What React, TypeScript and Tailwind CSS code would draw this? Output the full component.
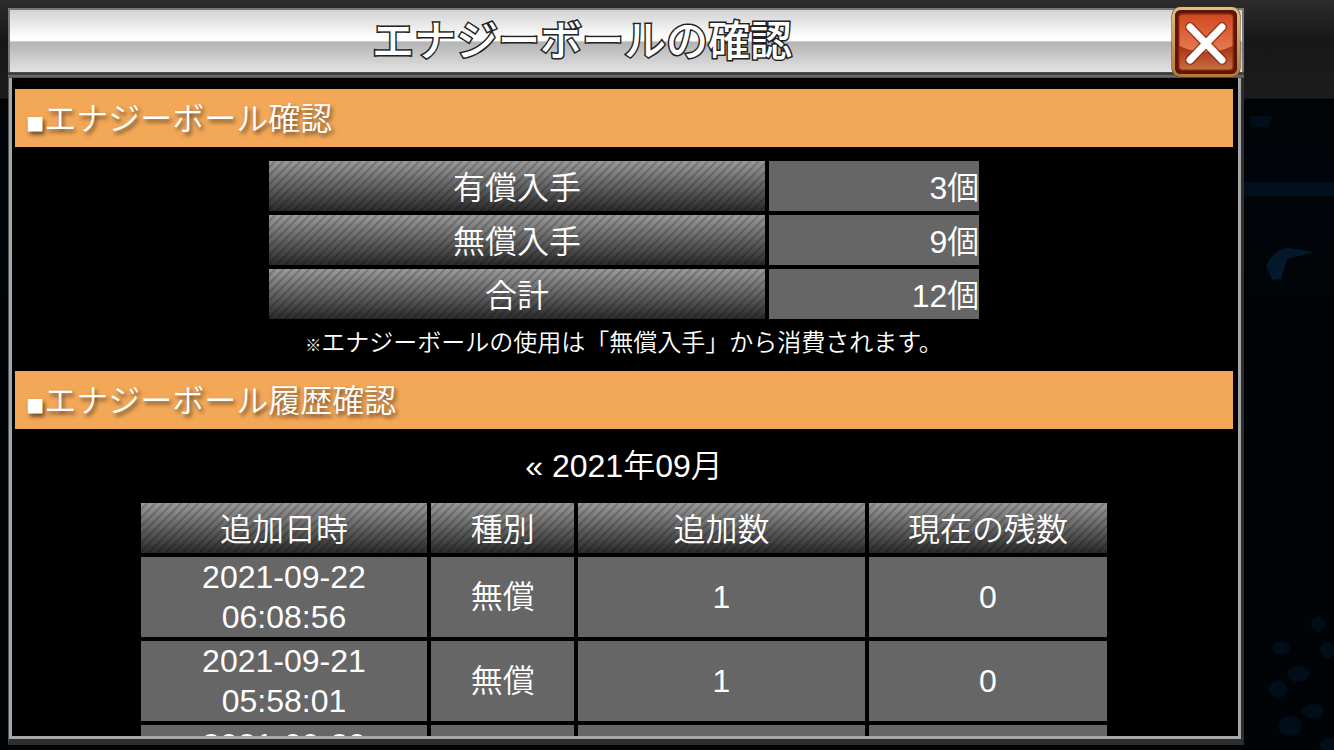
const summary = [
  { label: "有償入手", amount: "3個" },
  { label: "無償入手", amount: "9個" },
  { label: "合計", amount: "12個" },
];

const history = [
  { date: "2021-09-22", time: "06:08:56", kind: "無償", added: 1, rest: 0 },
  { date: "2021-09-21", time: "05:58:01", kind: "無償", added: 1, rest: 0 },
  { date: "2021-09-20", time: "06:12:30", kind: "無償", added: 1, rest: 0 },
];

const headCell =
  "h-[50px] p-0 pt-[3px] text-center font-[350] bg-[repeating-linear-gradient(135deg,#0000_0px,#0000_3px,#0003_4px,#0003_5px,#0000_6px),linear-gradient(#9a9a9a,#2a2a2a)]";

const dataCell = "p-0 bg-[#666666]";

// dimmed stadium behind the dialog
function Backdrop() {
  return (
    <svg
      aria-hidden="true"
      viewBox="0 0 90 750"
      preserveAspectRatio="xMaxYMin slice"
      className="absolute top-0 right-0 h-full w-[90px]"
    >
      <rect y="182" width="90" height="14" fill="#020f1c" />
      <path d="M5 116h24l-4 11H8z" fill="#020d1b" />
      <path d="M22 266q8-17 22-18l27 4-28 7-6 20-9 1z" fill="#04182b" />
      <g fill="#010d18">
        <ellipse cx="37" cy="648" rx="9" ry="7" />
        <ellipse cx="74" cy="624" rx="7" ry="8" />
        <ellipse cx="54" cy="674" rx="11" ry="8" />
        <ellipse cx="34" cy="689" rx="9" ry="9" />
        <ellipse cx="69" cy="711" rx="11" ry="7" />
        <ellipse cx="46" cy="726" rx="12" ry="10" />
        <ellipse cx="84" cy="650" rx="8" ry="8" />
        <ellipse cx="86" cy="745" rx="11" ry="7" />
      </g>
    </svg>
  );
}

function SectionTitle({ children }: { children: string }) {
  return (
    <h2 className="flex h-[58px] items-center bg-[#f3a858] px-[11px] pt-px [text-shadow:2px_3px_4px_#0009]">
      <span className="pt-2 text-[30px]">■</span>
      {children}
    </h2>
  );
}

function CloseButton() {
  return (
    <button type="button" aria-label="閉じる" className="absolute -top-[2px] right-[3px] h-[72px] w-[70px] cursor-pointer">
      <svg viewBox="0 0 70 72" className="size-full">
        <defs>
          <linearGradient id="rim" x1="0" y1="0" x2="0" y2="1">
            <stop offset="0" stopColor="#e2bd80" />
            <stop offset="1" stopColor="#b5793a" />
          </linearGradient>
          <linearGradient id="face" x1="0" y1="0" x2="0" y2="1">
            <stop offset="0" stopColor="#c8401c" />
            <stop offset="0.6" stopColor="#a83416" />
            <stop offset="1" stopColor="#c47040" />
          </linearGradient>
          <linearGradient id="gloss" x1="0" y1="0" x2="0" y2="1">
            <stop offset="0" stopColor="#cf4a22" />
            <stop offset="1" stopColor="#e87c56" />
          </linearGradient>
        </defs>
        <rect x="0.5" y="0.5" width="69" height="71" rx="9" fill="#5a3411" />
        <rect x="2.5" y="2.5" width="65" height="67" rx="7" fill="none" stroke="url(#rim)" strokeWidth="3" />
        <rect x="4" y="4" width="62" height="64" rx="6" fill="#5c1708" />
        <rect x="7" y="7" width="56" height="58" rx="4" fill="#8a2410" />
        <rect x="8.5" y="8.5" width="53" height="55" rx="3" fill="url(#face)" />
        <path d="M8.5 12a3 3 0 0 1 3-3h47a3 3 0 0 1 3 3v28q-26 12-53 0z" fill="url(#gloss)" />
        <path d="M19 21 51 54M51 21 19 54" stroke="#7a1c08" strokeWidth="10" strokeLinecap="round" opacity="0.6" />
        <path d="M19 21 51 54M51 21 19 54" stroke="#fff" strokeWidth="7" strokeLinecap="round" />
      </svg>
    </button>
  );
}

export default function App() {
  return (
    <main
      lang="ja"
      className="relative flex h-screen flex-col bg-[linear-gradient(#2c2c2c_0px,#171717_40px,#1c1c1c_98px,#010407_99px,#010509_190px,#010407_300px,#010407)] pt-2 pr-[90px] pb-[5px] pl-2 font-['Liberation_Sans','Noto_Sans_CJK_JP',sans-serif] text-[32px] leading-10 font-[350] text-white"
    >
      <Backdrop />
      <div className="relative flex min-h-0 flex-1 flex-col">
        <header className="flex h-[64px] shrink-0 items-center justify-center border-2 border-b-0 border-[#777] bg-[linear-gradient(#d2d2d2,#ffffff_45%,#ffffff_49%,#b4b4b4_52%,#e2e2e2)] pr-[88px]">
          <h1 className="pt-[2px] text-[42px] leading-[60px] font-medium [-webkit-text-stroke:3px_#222] [paint-order:stroke_fill]">
            エナジーボールの確認
          </h1>
        </header>
        <div className="h-[6px] shrink-0 bg-[linear-gradient(#555_0px,#333_2px,#777_4px,#444_6px)]" />
        <CloseButton />

        <div className="flex min-h-0 flex-1 flex-col border-r-3 border-b-[6px] border-l border-[#2e2e2e] border-l-[#555]">
          <div className="flex min-h-0 flex-1 flex-col border-x-3 border-b-3 border-[#a6a6a6] bg-black pr-[5px] pl-[3px]">
            <div className="min-h-0 flex-1 overflow-y-auto pt-[11px] [scrollbar-width:none]">
              <SectionTitle>エナジーボール確認</SectionTitle>
              <table className="mx-auto mt-[10px] w-[59%] border-separate border-spacing-1">
                <tbody>
                  {summary.map((row) => (
                    <tr key={row.label}>
                      <th scope="row" className={headCell}>
                        {row.label}
                      </th>
                      <td className="w-[210px] bg-[#666666] p-0 pt-[3px] text-right">{row.amount}</td>
                    </tr>
                  ))}
                </tbody>
              </table>
              <p className="mb-2 text-center text-2xl leading-10">
                <span className="text-base font-bold">※</span>
                エナジーボールの使用は「無償入手」から消費されます。
              </p>

              <SectionTitle>エナジーボール履歴確認</SectionTitle>
              <nav className="flex h-[70px] items-center justify-center pt-[3px]">
                <a href="#prev">« 2021年09月</a>
              </nav>
              <table className="mx-auto w-4/5 table-fixed border-separate border-spacing-1 text-center">
                <thead>
                  <tr>
                    <th scope="col" className={`${headCell} w-[30%]`}>追加日時</th>
                    <th scope="col" className={`${headCell} w-[15%]`}>種別</th>
                    <th scope="col" className={`${headCell} w-[30%]`}>追加数</th>
                    <th scope="col" className={`${headCell} w-[25%]`}>現在の残数</th>
                  </tr>
                </thead>
                <tbody>
                  {history.map((row) => (
                    <tr key={row.date}>
                      <td className={dataCell}>
                        <span className="block">{row.date}</span>
                        <span className="block">{row.time}</span>
                      </td>
                      <td className={dataCell}>{row.kind}</td>
                      <td className={dataCell}>{row.added}</td>
                      <td className={dataCell}>{row.rest}</td>
                    </tr>
                  ))}
                </tbody>
              </table>
            </div>
          </div>
        </div>
      </div>
    </main>
  );
}
